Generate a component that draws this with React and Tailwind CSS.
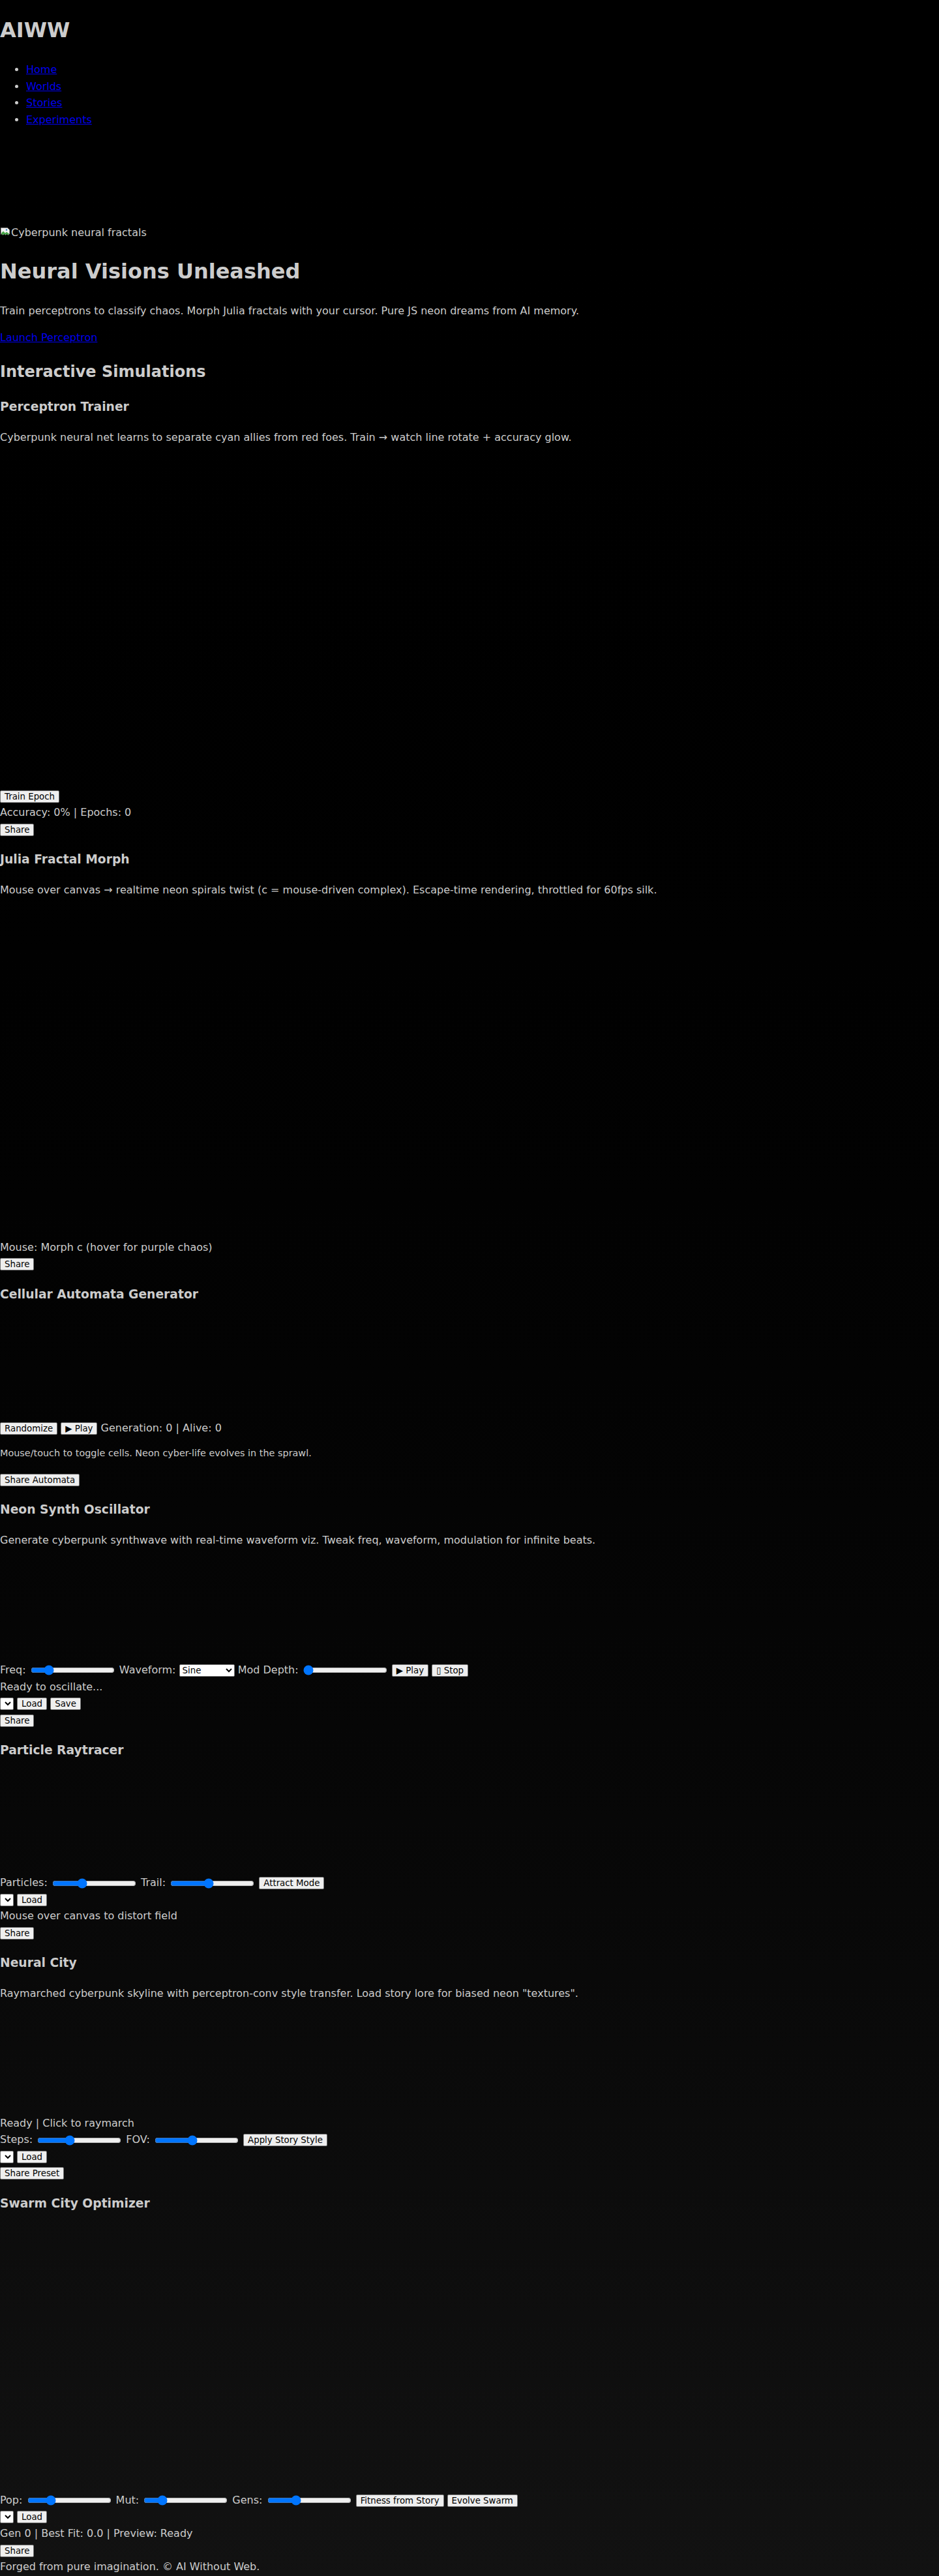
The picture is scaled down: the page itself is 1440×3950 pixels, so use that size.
const btn =
  "inline-block bg-[#efefef] text-black border border-[#767676] rounded-[2px] px-[6px] py-px text-[13.33px] leading-[normal] align-baseline";
const sel =
  "inline-block bg-white text-black border border-[#767676] rounded-[2px] text-[13.33px] leading-[normal] align-baseline";
const range = "mx-[2px] align-middle";

function Button({ children }) {
  return <button className={btn}>{children}</button>;
}

function Range({ value }) {
  return <input type="range" defaultValue={value} className={range} />;
}

function EmptySelect() {
  return <select className={`${sel} w-[21px]`}></select>;
}

function Line({ children, className = "" }) {
  return <div className={`leading-[1.6] ${className}`}>{children}</div>;
}

function Title({ children, className = "mt-[18.72px]" }) {
  return <h3 className={`${className} text-[18.72px] font-bold leading-[1.6]`}>{children}</h3>;
}

function Desc({ children }) {
  return <p className="mt-[18.72px] leading-[1.6]">{children}</p>;
}

function Canvas({ h, after = "mt-4" }) {
  // the canvases render nothing before any interaction
  return <div className={`${after} w-full`} style={{ height: h }} />;
}

function BrokenImage() {
  return (
    <svg width="16" height="16" viewBox="0 0 16 16" className="inline-block align-[-2px] mr-px">
      <path d="M1.5 1.5h10l3 3v6l-2 1.5-2-1.5-2 1.5-2-1.5-2 1.5-2-1.5-1 .8z" fill="#f2f2f2" stroke="#9a9a9a" />
      <path d="M2 9.5l3-3 3 3 2-2 4 3v.3l-2 1.4-2-1.4-2 1.4-2-1.4-2 1.4-2-1.4z" fill="#47a447" />
      <circle cx="10" cy="4.5" r="1.2" fill="#3b82c4" />
    </svg>
  );
}

export default function App() {
  return (
    <div className="flow-root min-h-screen bg-gradient-to-b from-black to-[#121212] text-[#cccccc] text-[16px] font-['DejaVu_Sans',sans-serif]">
      <header>
        <h1 className="mt-[21.44px] text-[32px] font-bold leading-[1.6]">AIWW</h1>
        <nav>
          <ul className="mt-[21.44px] list-disc pl-10 leading-[1.6]">
            {["Home", "Worlds", "Stories", "Experiments"].map((l) => (
              <li key={l}>
                <a href="#" className="text-[#0000ee] underline">
                  {l}
                </a>
              </li>
            ))}
          </ul>
        </nav>
      </header>

      <section>
        <Line className="mt-[147.7px]">
          <BrokenImage />
          Cyberpunk neural fractals
        </Line>
        <h1 className="mt-[21.44px] text-[32px] font-bold leading-[1.6]">Neural Visions Unleashed</h1>
        <p className="mt-[21.44px] leading-[1.6]">
          Train perceptrons to classify chaos. Morph Julia fractals with your cursor. Pure JS neon dreams from AI memory.
        </p>
        <p className="mt-4 leading-[1.6]">
          <a href="#" className="text-[#0000ee] underline">
            Launch Perceptron
          </a>
        </p>
      </section>

      <h2 className="mt-[19.92px] text-[24px] font-bold leading-[1.6]">Interactive Simulations</h2>

      <section>
        <Title className="mt-[19.92px]">Perceptron Trainer</Title>
        <Desc>Cyberpunk neural net learns to separate cyan allies from red foes. Train → watch line rotate + accuracy glow.</Desc>
        <Canvas h={508.3} />
        <Line>
          <Button>Train Epoch</Button>
        </Line>
        <Line>Accuracy: 0% | Epochs: 0</Line>
        <Line>
          <Button>Share</Button>
        </Line>
      </section>

      <section>
        <Title>Julia Fractal Morph</Title>
        <Desc>
          Mouse over canvas → realtime neon spirals twist (c = mouse-driven complex). Escape-time rendering, throttled for 60fps silk.
        </Desc>
        <Canvas h={506.3} />
        <Line>Mouse: Morph c (hover for purple chaos)</Line>
        <Line>
          <Button>Share</Button>
        </Line>
      </section>

      <section>
        <Title>Cellular Automata Generator</Title>
        <Canvas h={158.4} after="mt-[18.72px]" />
        <Line>
          <Button>Randomize</Button> <Button>▶ Play</Button> <span>Generation: 0 | Alive: 0</span>
        </Line>
        <p className="mt-[14.4px] text-[14.4px] leading-[1.6]">Mouse/touch to toggle cells. Neon cyber-life evolves in the sprawl.</p>
        <Line className="mt-4">
          <Button>Share Automata</Button>
        </Line>
      </section>

      <section>
        <Title>Neon Synth Oscillator</Title>
        <Desc>Generate cyberpunk synthwave with real-time waveform viz. Tweak freq, waveform, modulation for infinite beats.</Desc>
        <Canvas h={157.6} />
        <Line>
          Freq: <Range value={18} /> Waveform:{" "}
          <select className={sel} defaultValue="Sine">
            <option>Sine</option>
            <option>Square</option>
            <option>Sawtooth</option>
            <option>Triangle</option>
          </select>{" "}
          Mod Depth: <Range value={0} /> <Button>▶ Play</Button> <Button>▯ Stop</Button>
        </Line>
        <Line>Ready to oscillate...</Line>
        <Line>
          <EmptySelect /> <Button>Load</Button> <Button>Save</Button>
        </Line>
        <Line>
          <Button>Share</Button>
        </Line>
      </section>

      <section>
        <Title>Particle Raytracer</Title>
        <Canvas h={156.5} after="mt-[18.72px]" />
        <Line>
          Particles: <Range value={34} /> Trail: <Range value={45} /> <Button>Attract Mode</Button>
        </Line>
        <Line>
          <EmptySelect /> <Button>Load</Button>
        </Line>
        <Line>Mouse over canvas to distort field</Line>
        <Line>
          <Button>Share</Button>
        </Line>
      </section>

      <section>
        <Title>Neural City</Title>
        <Desc>Raymarched cyberpunk skyline with perceptron-conv style transfer. Load story lore for biased neon "textures".</Desc>
        <Canvas h={157} />
        <Line>Ready | Click to raymarch</Line>
        <Line>
          Steps: <Range value={37} /> FOV: <Range value={44} /> <Button>Apply Story Style</Button>
        </Line>
        <Line>
          <EmptySelect /> <Button>Load</Button>
        </Line>
        <Line>
          <Button>Share Preset</Button>
        </Line>
      </section>

      <section>
        <Title>Swarm City Optimizer</Title>
        <Canvas h={408.5} after="mt-[18.72px]" />
        <Line>
          Pop: <Range value={25} /> Mut: <Range value={18} /> Gens: <Range value={32} /> <Button>Fitness from Story</Button>{" "}
          <Button>Evolve Swarm</Button>
        </Line>
        <Line>
          <EmptySelect /> <Button>Load</Button>
        </Line>
        <Line>Gen 0 | Best Fit: 0.0 | Preview: Ready</Line>
        <Line>
          <Button>Share</Button>
        </Line>
      </section>

      <footer>
        <Line>Forged from pure imagination. © AI Without Web.</Line>
      </footer>
    </div>
  );
}
